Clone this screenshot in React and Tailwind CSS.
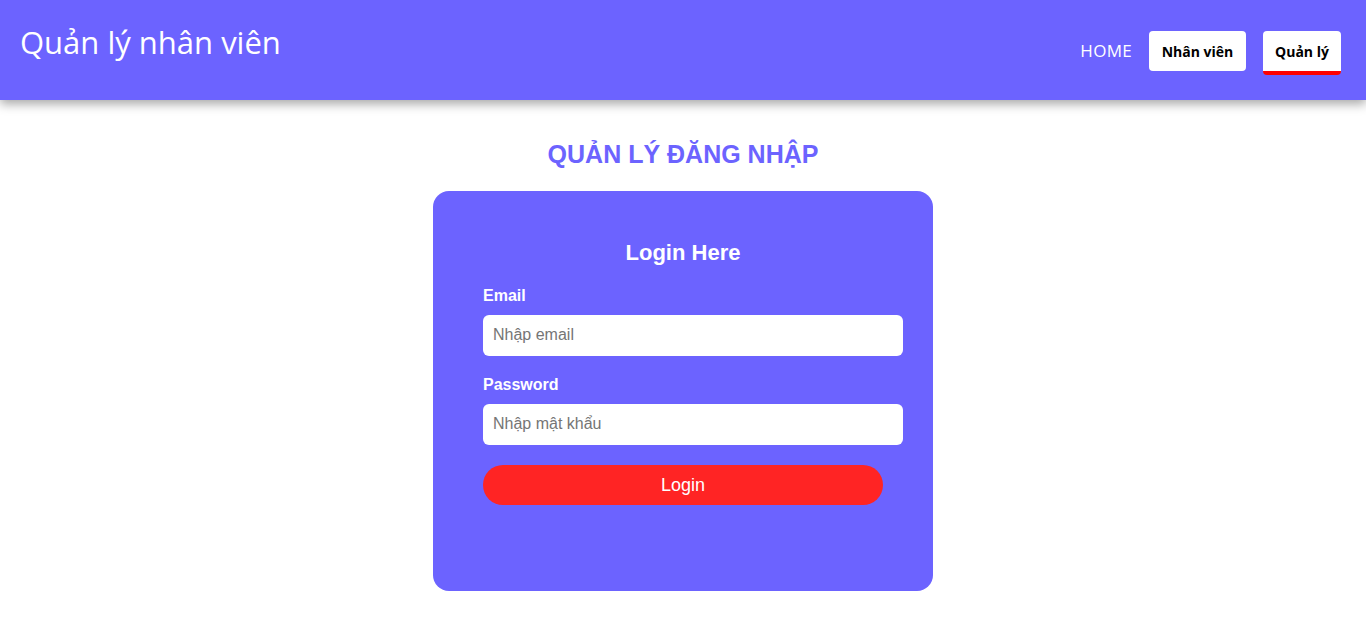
export default function App() {
  return (
    <div className="min-h-screen bg-white" style={{ fontFamily: '"Liberation Sans", Arial, sans-serif' }}>
      <header className="h-[100px] bg-[#6c63ff] flex items-start justify-between px-5 shadow-[0_4px_10px_rgba(0,0,0,0.35)] relative z-10">
        <h1 className="mt-[20px] text-[31px] leading-[44px] text-white" style={{ fontFamily: '"Open Sans", sans-serif' }}>
          Quản lý nhân viên
        </h1>
        <nav className="flex items-start gap-[17px] mt-[31px] mr-[5px]" style={{ fontFamily: '"Open Sans", sans-serif' }}>
          <a className="text-white text-[17px] leading-[40px] font-normal tracking-[0.3px]">HOME</a>
          <button className="h-[40px] w-[97px] bg-white rounded-[4px] text-[14px] font-bold text-black">Nhân viên</button>
          <button className="h-[44px] w-[78px] bg-white rounded-[4px] text-[14px] font-bold text-black border-b-4 border-[#ff0000]">Quản lý</button>
        </nav>
      </header>
      <main className="flex flex-col items-center">
        <h2 className="mt-[40px] text-[25px] leading-[28px] font-bold text-[#6c63ff]">QUẢN LÝ ĐĂNG NHẬP</h2>
        <div className="mt-[23px] w-[500px] h-[400px] bg-[#6c63ff] rounded-[16px] px-[50px] pt-[49px]">
          <h3 className="text-center text-[22px] leading-[26px] font-bold text-white">Login Here</h3>
          <label className="block mt-[21px] text-[16px] leading-[18px] font-bold text-white">Email</label>
          <input
            className="block mt-[10px] w-[420px] h-[41px] bg-white rounded-[6px] px-[10px] pb-[2px] text-[16px] text-gray-800 placeholder:text-[#757575] outline-none"
            placeholder="Nhập email"
          />
          <label className="block mt-[20px] text-[16px] leading-[18px] font-bold text-white">Password</label>
          <input
            type="password"
            className="block mt-[10px] w-[420px] h-[41px] bg-white rounded-[6px] px-[10px] pb-[2px] text-[16px] text-gray-800 placeholder:text-[#757575] outline-none"
            placeholder="Nhập mật khẩu"
          />
          <button className="block mt-[20px] w-[400px] h-[40px] rounded-full bg-[#ff2424] text-white text-[18px]">Login</button>
        </div>
      </main>
    </div>
  );
}
